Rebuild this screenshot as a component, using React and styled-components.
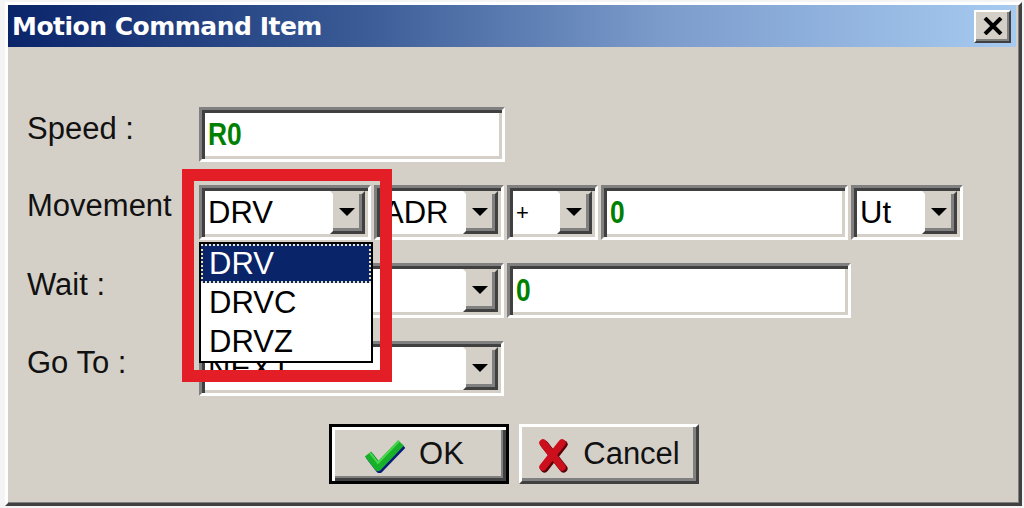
import React from "react"
import styled, { createGlobalStyle } from "styled-components"

const Global = createGlobalStyle`
  html, body {
    margin: 0;
    padding: 0;
    background: #f4f4f4;
  }
  body {
    font-family: "Liberation Sans", Arial, sans-serif;
  }
`

const Window = styled.div`
  box-sizing: border-box;
  margin: 2px 0 0 5px;
  width: 1017px;
  height: 504px;
  background: #d4d0c8;
  border: 3px solid;
  border-color: #ffffff #404040 #404040 #ffffff;
  box-shadow: inset -1px -1px 0 #808080;
  display: flex;
  flex-direction: column;
`

const TitleBar = styled.div`
  height: 42px;
  margin: 0 3px 0 0;
  background: linear-gradient(to right, #0a246a 0%, #3a5b96 35%, #7c9ccc 65%, #a6caf0 100%);
  display: flex;
  align-items: center;
  justify-content: space-between;
  padding: 0 5px 0 4px;
`

const Title = styled.span`
  color: #ffffff;
  font-family: "DejaVu Sans", Verdana, sans-serif;
  font-weight: bold;
  font-size: 25px;
  letter-spacing: -0.5px;
`

const CloseBox = styled.div`
  box-sizing: border-box;
  width: 37px;
  height: 33px;
  background: #d4d0c8;
  border: 2px solid;
  border-color: #ffffff #404040 #404040 #ffffff;
  box-shadow: inset -2px -2px 0 #808080;
  display: flex;
  align-items: center;
  justify-content: center;
`

const Body = styled.div`
  flex: 1;
  padding: 60px 0 0 19px;
  display: flex;
  flex-direction: column;
`

const Form = styled.div`
  display: grid;
  grid-template-columns: 172px 1fr;
  grid-auto-rows: 55px;
  row-gap: 23px;
  align-items: center;
`

const Label = styled.div`
  font-size: 31px;
  color: #111;
  align-self: center;
  margin-top: ${p => p.$dy || -12}px;
`

const Controls = styled.div`
  display: flex;
  gap: 3px;
  height: 55px;
  position: relative;
`

const Sunken = styled.div`
  box-sizing: border-box;
  position: relative;
  width: ${p => p.$w}px;
  height: 100%;
  background: #ffffff;
  border: 3px solid;
  border-color: #808080 #ffffff #ffffff #808080;
  box-shadow: inset 3px 3px 0 #404040, inset -3px -3px 0 #d4d0c8;
  display: flex;
  align-items: center;
  padding: 3px 3px 3px 6px;
  font-size: 31px;
  color: #000;
  overflow: hidden;
`

const Value = styled.span`
  flex: 1;
  white-space: nowrap;
  font-size: ${p => p.$size || 31}px;
  color: ${p => (p.$green ? "#008000" : "#000")};
  font-weight: ${p => (p.$green ? "bold" : "normal")};
  transform: ${p => (p.$green ? "scaleX(0.85)" : "none")};
  transform-origin: left center;
`

const DropButton = styled.div`
  box-sizing: border-box;
  width: 35px;
  height: 100%;
  flex: none;
  background: #d4d0c8;
  border: 3px solid;
  border-color: #d4d0c8 #404040 #404040 #ffffff;
  box-shadow: inset -3px -3px 0 #808080;
  display: flex;
  align-items: center;
  justify-content: center;
`

const Arrow = styled.div`
  width: 0;
  height: 0;
  border-left: 8px solid transparent;
  border-right: 8px solid transparent;
  border-top: 8px solid #000;
  margin: 0 2px 2px 0;
`

const ListBox = styled.div`
  position: absolute;
  left: 0;
  top: 57px;
  width: 174px;
  box-sizing: border-box;
  background: #ffffff;
  border: 2px solid #000;
  z-index: 2;
`

const ListItem = styled.div`
  box-sizing: border-box;
  height: 39px;
  padding-left: 6px;
  display: flex;
  align-items: center;
  font-size: 31px;
  color: ${p => (p.$active ? "#fff" : "#000")};
  background: ${p => (p.$active ? "#0a246a" : "transparent")};
  border: 2px dotted ${p => (p.$active ? "#e8e4c0" : "transparent")};
`

const Highlight = styled.div`
  position: absolute;
  left: -17px;
  top: -16px;
  width: 210px;
  height: 213px;
  box-sizing: border-box;
  border: 12px solid #e41e26;
  z-index: 3;
  pointer-events: none;
`

const ButtonRow = styled.div`
  display: flex;
  justify-content: center;
  gap: 10px;
  margin: 28px 0 0 -19px;
`

const PushButton = styled.div`
  box-sizing: border-box;
  width: 180px;
  height: 60px;
  background: #d4d0c8;
  border: 3px solid;
  border-color: ${p => (p.$default ? "#000" : "#ffffff #404040 #404040 #ffffff")};
  box-shadow: ${p =>
    p.$default
      ? "inset 3px 3px 0 #ffffff, inset -3px -3px 0 #404040, inset -5px -5px 0 #808080"
      : "inset -3px -3px 0 #808080"};
  display: flex;
  align-items: center;
  justify-content: center;
  gap: 14px;
  font-size: 31px;
  color: #111;
  padding-right: ${p => p.$pr || 0}px;
`

const CheckIcon = () => (
  <svg width="42" height="38" viewBox="0 0 42 38">
    <path
      d="M5 19 L15 32 L38 8"
      fill="none"
      stroke="#0a1a78"
      strokeWidth="8"
      strokeLinejoin="round"
      transform="translate(1.5 2)"
    />
    <path d="M5 19 L15 32 L38 8" fill="none" stroke="#17b02a" strokeWidth="8" strokeLinejoin="round" />
    <path d="M7 18 L15 28 L36 6" fill="none" stroke="#4ad84a" strokeWidth="2" />
  </svg>
)

const CrossIcon = () => (
  <svg width="32" height="38" viewBox="0 0 32 38">
    <g transform="translate(1.5 1.5)" stroke="#5c0008" strokeWidth="8" strokeLinecap="round">
      <path d="M6 8 L25 32" />
      <path d="M25 8 L6 32" />
    </g>
    <g stroke="#cc0f1c" strokeWidth="7.5" strokeLinecap="round">
      <path d="M6 8 L25 32" />
      <path d="M25 8 L6 32" />
    </g>
  </svg>
)

const CloseX = () => (
  <svg width="20" height="18" viewBox="0 0 20 18">
    <path d="M2 1 L18 17 M18 1 L2 17" stroke="#000" strokeWidth="4" />
  </svg>
)

const Combo = ({ w, children, size }) => (
  <Sunken $w={w}>
    <Value $size={size}>{children}</Value>
    <DropButton>
      <Arrow />
    </DropButton>
  </Sunken>
)

export default () => {
  const options = ["DRV", "DRVC", "DRVZ"]

  return (
    <>
      <Global />
      <Window>
        <TitleBar>
          <Title>Motion Command Item</Title>
          <CloseBox>
            <CloseX />
          </CloseBox>
        </TitleBar>
        <Body>
          <Form>
            <Label>Speed :</Label>
            <Controls>
              <Sunken $w={306}>
                <Value $green>R0</Value>
              </Sunken>
            </Controls>

            <Label $dy={-14}>Movement</Label>
            <Controls>
              <Combo w={172}>DRV</Combo>
              <Combo w={130}>ADR</Combo>
              <Combo w={91} size={22}>+</Combo>
              <Sunken $w={247}>
                <Value $green>0</Value>
              </Sunken>
              <Combo w={112}>Ut</Combo>
              <ListBox>
                {options.map((o, i) => (
                  <ListItem key={o} $active={i === 0}>
                    {o}
                  </ListItem>
                ))}
              </ListBox>
              <Highlight />
            </Controls>

            <Label>Wait :</Label>
            <Controls>
              <Combo w={305}></Combo>
              <Sunken $w={344}>
                <Value $green>0</Value>
              </Sunken>
            </Controls>

            <Label>Go To :</Label>
            <Controls>
              <Combo w={305}>NEXT</Combo>
            </Controls>
          </Form>
          <ButtonRow>
            <PushButton $default $pr={10}>
              <CheckIcon />
              OK
            </PushButton>
            <PushButton>
              <CrossIcon />
              Cancel
            </PushButton>
          </ButtonRow>
        </Body>
      </Window>
    </>
  )
}
